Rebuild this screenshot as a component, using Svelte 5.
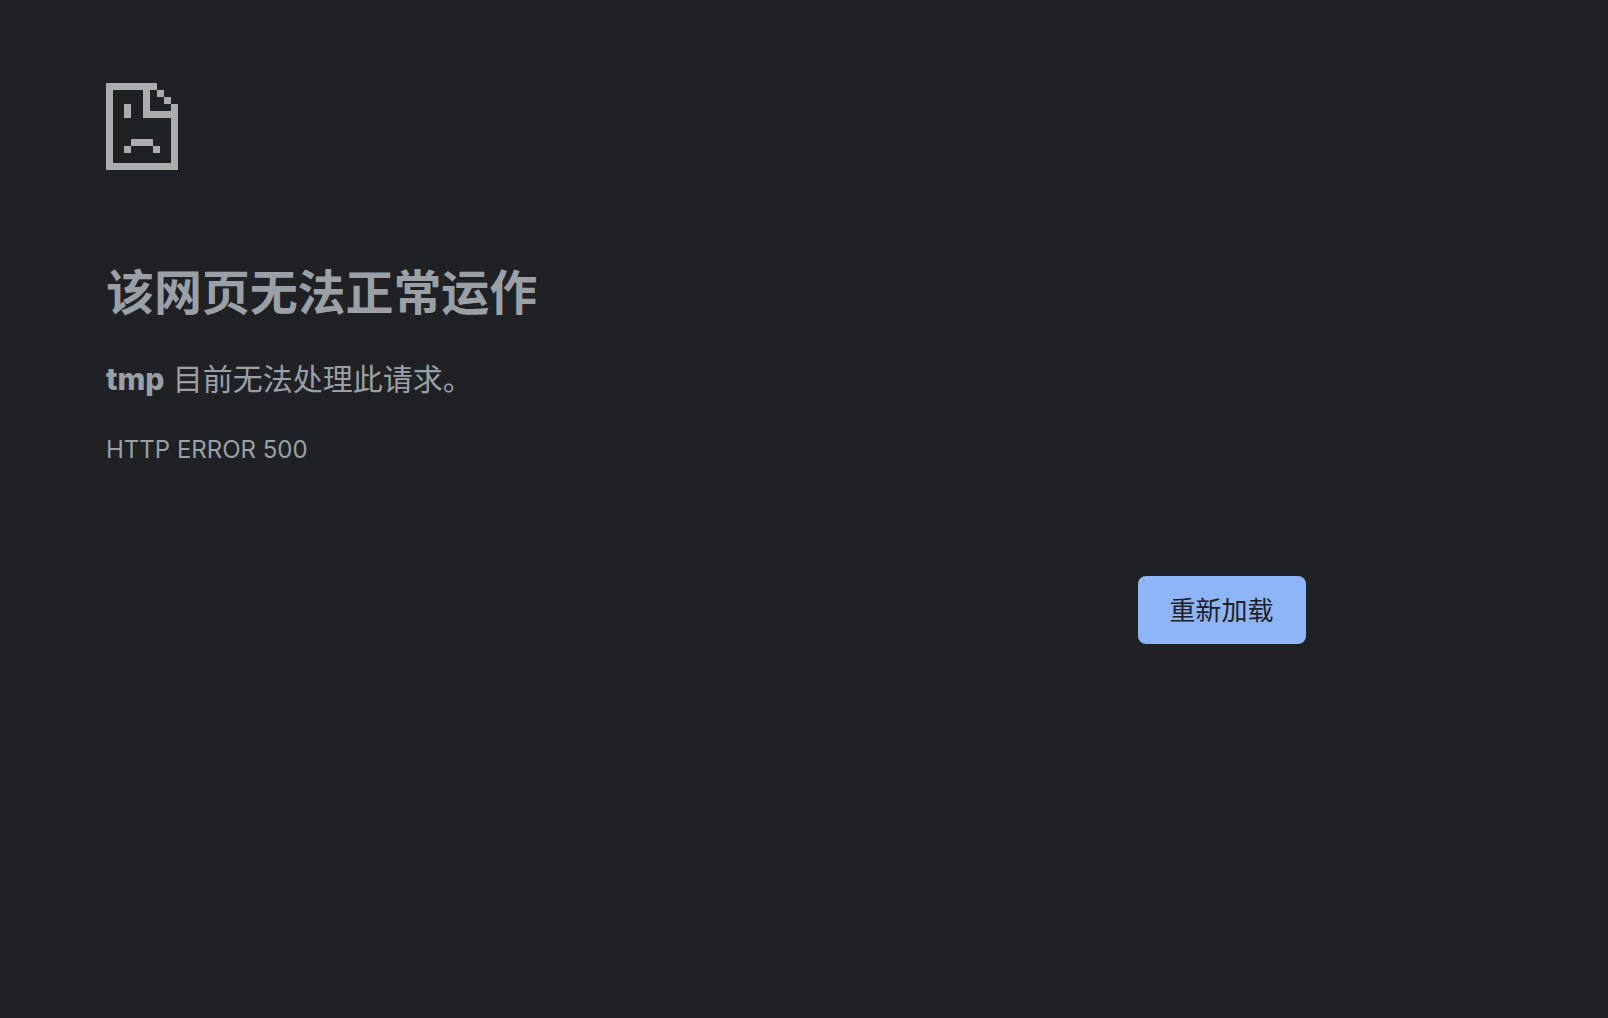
<script lang="ts">
  let host = $state('tmp');
  let errorCode = $state('HTTP ERROR 500');

  function reload() {
    location.reload();
  }
</script>

<main class="interstitial">
  <svg class="icon" viewBox="0 0 72 87" shape-rendering="crispEdges" aria-hidden="true">
    <!-- page outline with folded corner -->
    <path d="M0 0h51v7H44v21h21v-7h7v66H0zM7 7v73h58V35H37V7z" fill-rule="evenodd" />
    <path d="M51 7h7v7h-7zM58 14h7v7h-7z" />
    <!-- face -->
    <path d="M18 21h7v14h-7zM25 56h22v7H25zM18 63h7v7h-7zM47 63h7v7h-7z" />
  </svg>

  <h1>该网页无法正常运作</h1>
  <p class="summary"><strong>{host}</strong> 目前无法处理此请求。</p>
  <div class="error-code">{errorCode}</div>

  <div class="actions">
    <button onclick={reload}>重新加载</button>
  </div>
</main>

<style>
  :global(body) {
    margin: 0;
    background: #202124;
  }

  .interstitial {
    box-sizing: border-box;
    width: 1200px;
    margin-left: 106px;
    padding-top: 83px;
    color: #9aa0a6;
    font-family: Inter, 'Noto Sans CJK SC', sans-serif;
  }

  .icon {
    display: block;
    width: 72px;
    height: 87px;
    fill: #acacac;
  }

  h1 {
    margin: 87px 0 0;
    font-size: 48px;
    font-weight: 700;
    line-height: 72px;
    letter-spacing: -0.1px;
  }

  .summary {
    margin: 28px 0 0;
    font-size: 30px;
    line-height: 45px;
  }

  .summary strong {
    font-weight: 800;
  }

  .error-code {
    margin-top: 30px;
    font-size: 24px;
    line-height: 36px;
  }

  .actions {
    display: flex;
    justify-content: flex-end;
    margin-top: 108px;
  }

  button {
    width: 168px;
    height: 68px;
    padding: 0 1px 3px 0;
    border: 0;
    border-radius: 8px;
    background: #8db5f7;
    color: #202124;
    font-family: inherit;
    font-size: 26px;
    cursor: pointer;
  }
</style>
